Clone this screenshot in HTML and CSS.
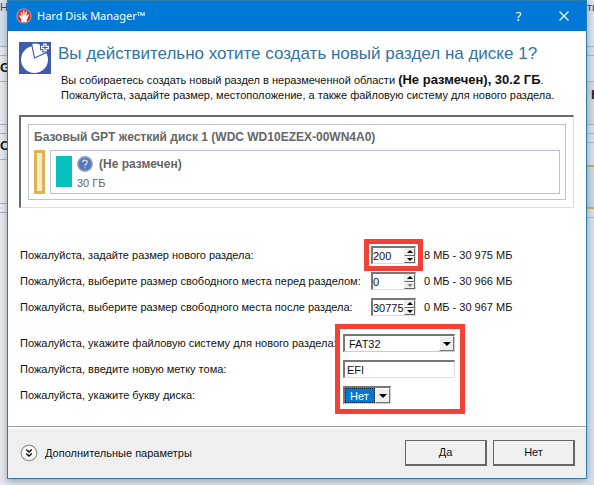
FILE: index.html
```html
<!DOCTYPE html>
<html lang="ru">
<head>
<meta charset="utf-8">
<title>Hard Disk Manager</title>
<link rel="stylesheet" href="styles.css">
</head>
<body>
<div class="behind" aria-hidden="true">
  <div class="strip">
    <div class="band tall tint"><span class="small">Н</span></div>
    <div class="band thin"></div>
    <div class="band mid"><b>G</b></div>
    <div class="band large"></div>
    <div class="band thin"></div>
    <div class="band mid"><b>C</b></div>
    <div class="band large short"></div>
    <div class="band thin"></div>
  </div>
  <div class="strip right">
    <div class="band tall tint"><span class="small">ть</span></div>
    <div class="band thin"></div>
    <div class="band mid"></div>
    <div class="band large grey"><b>Н</b></div>
    <div class="band thin"></div>
    <div class="band thin"></div>
    <div class="band gold"></div>
    <div class="band thin"></div>
  </div>
</div>
<main class="window">
  <header class="titlebar">
    <svg class="app-icon" viewBox="0 0 16 16" aria-hidden="true">
      <circle cx="8" cy="8" r="7.6" fill="#d9a8a4"/>
      <circle cx="8" cy="8" r="6.8" fill="#c8372f"/>
      <path d="M5.5 14 5 10.500 2.800 7.800q.3-1 1.300-.3L5.500 9 4.700 4.500q.6-.9 1.200 0L7 8l.2-5.200q.6-.8 1.200 0L8.700 8l1.200-4.400q.8-.6 1 .3L10.400 8.500l1.700-2q1-.2.800.7L11.200 11l-.7 3z" fill="#fff"/>
    </svg>
    <h1 class="app-name">Hard Disk Manager™</h1>
    <button class="caption" aria-label="Справка">?</button>
    <button class="caption" aria-label="Закрыть">
      <svg class="cross" viewBox="0 0 10 10"><path d="M.5.500l9 9M9.500.500l-9 9" stroke="#fff" stroke-width="1.200"/></svg>
    </button>
  </header>
  <section class="intro">
    <svg class="pie" viewBox="0 0 32 32" aria-hidden="true">
      <path fill="#405ba6" d="M0 0h32v32H0z"/>
      <circle cx="15.500" cy="17.500" r="13.500" fill="#fff"/>
      <path d="M12.500 1.500Q17 .2 21.500 2.200L28.500 10 15.500 16z" fill="#fff" stroke="#405ba6" stroke-width="1.200"/>
      <path d="M26 .5v10M21 5.500h10" stroke="#405ba6" stroke-width="5.500"/>
      <path d="M26 1.500v8M22 5.500h8" stroke="#fff" stroke-width="3.400"/>
      <path d="M26 2.800v5.400M23.300 5.500h5.400" stroke="#405ba6"/>
    </svg>
    <div class="intro-text">
      <h2>Вы действительно хотите создать новый раздел на диске 1?</h2>
      <p>Вы собираетесь создать новый раздел в неразмеченной области <b>(Не размечен), 30.2 ГБ</b>.<br>Пожалуйста, задайте размер, местоположение, а также файловую систему для нового раздела.</p>
    </div>
  </section>
  <section class="disk-well">
    <div class="disk">
      <h3>Базовый GPT жесткий диск 1 (WDC WD10EZEX-00WN4A0)</h3>
      <div class="partitions">
        <div class="reserved"></div>
        <div class="partition">
          <div class="swatch"></div>
          <div>
            <div class="part-name">
              <svg class="help" viewBox="0 0 16 16" aria-hidden="true">
                <circle cx="8" cy="8" r="7.900" fill="#8d9cc4"/>
                <circle cx="8" cy="8" r="6.300" fill="#5878b8"/>
                <path d="M5.700 6.300C5.700 3.500 10.300 3.500 10.300 6.200 10.300 8 8 8 8 9.800M8 11.200v1.400" fill="none" stroke="#dbe4f5" stroke-width="1.200"/>
              </svg>
              <b>(Не размечен)</b>
            </div>
            <div class="part-size">30 ГБ</div>
          </div>
        </div>
      </div>
    </div>
  </section>
  <form class="settings">
    <div class="group">
      <div class="row">
        <label class="size-label" for="size">Пожалуйста, задайте размер нового раздела:</label>
        <div class="spin marked"><input id="size" type="text" value="200"><span class="arrows"><button type="button" class="up" aria-label="Больше"></button><button type="button" class="down" aria-label="Меньше"></button></span></div>
        <span class="range">8 МБ - 30 975 МБ</span>
      </div>
      <div class="row">
        <label class="size-label" for="before">Пожалуйста, выберите размер свободного места перед разделом:</label>
        <div class="spin"><input id="before" type="text" value="0"><span class="arrows"><button type="button" class="up" aria-label="Больше"></button><button type="button" class="down off" aria-label="Меньше"></button></span></div>
        <span class="range">0 МБ - 30 966 МБ</span>
      </div>
      <div class="row">
        <label class="size-label" for="after">Пожалуйста, выберите размер свободного места после раздела:</label>
        <div class="spin"><input id="after" type="text" value="30775"><span class="arrows"><button type="button" class="up" aria-label="Больше"></button><button type="button" class="down" aria-label="Меньше"></button></span></div>
        <span class="range">0 МБ - 30 967 МБ</span>
      </div>
    </div>
    <div class="group fs-group">
      <div class="fs-labels">
        <label for="fs">Пожалуйста, укажите файловую систему для нового раздела:</label>
        <label for="volume">Пожалуйста, введите новую метку тома:</label>
        <label for="letter">Пожалуйста, укажите букву диска:</label>
      </div>
      <div class="fs-fields">
        <div class="combo"><select id="fs"><option>FAT32</option></select><span class="drop"></span></div>
        <input class="volume" id="volume" type="text" value="EFI">
        <div class="combo letter"><select id="letter"><option>Нет</option></select><span class="drop"></span></div>
      </div>
    </div>
  </form>
  <footer class="footer">
    <button class="more">
      <svg class="chevrons" viewBox="0 0 18 18" aria-hidden="true">
        <circle cx="9" cy="9" r="7.800" fill="#fafafa" stroke="#a0a0a0" stroke-width="1.400"/>
        <path d="M6.200 5.500 9 8l2.800-2.500M6.200 9.500 9 12l2.800-2.500" fill="none" stroke="#111" stroke-width="1.500"/>
      </svg>
      Дополнительные параметры
    </button>
    <button class="action">Да</button>
    <button class="action">Нет</button>
  </footer>
</main>
</body>
</html>
```
FILE: styles.css
```css
* { box-sizing: border-box; }
body {
  margin: 0;
  min-height: 100vh;
  padding: 0 7px 7px;
  background: #e6e6e6;
  color: #111;
  font: 11px/14px "Liberation Sans", Arial, sans-serif;
}
h1, h2, h3, p { margin: 0; }
button, input, select { font: inherit; color: inherit; }

/* Parent application window visible around the dialog */
.behind {
  position: absolute;
  inset: 0;
  overflow: hidden;
  display: flex;
  justify-content: space-between;
}
.strip { width: 7px; overflow: hidden; background: #e8e9ec; }
.strip.right { background: #d9dfe8; }
.band { border-bottom: 1px solid #a9b3c4; overflow: hidden; white-space: nowrap; }
.band b { font-size: 13px; }
.right b { padding-left: 4px; color: #301030; }
.tint { background: #d9e2ee; }
.grey { background: #d6d6da; }
.small { font-size: 11px; line-height: 8px; color: #35466c; }
.tall { height: 47px; }
.thin { height: 9px; }
.mid { height: 26px; padding-top: 4px; }
.large { height: 43px; padding-top: 6px; }
.strip:not(.right) .thin + .mid { padding-top: 5px; }
.short { height: 44px; }
.gold { height: 44px; border-top: 2px solid #d7ac3c; border-bottom: 2px solid #d7ac3c; margin-top: 22px; background: #cbd6df; }

.window {
  position: relative;
  border: 1px solid #2f7cae;
  background: #fff;
  box-shadow: 0 2px 7px rgba(40, 70, 110, .45);
}
.titlebar {
  display: flex;
  align-items: center;
  height: 30px;
  padding-left: 8px;
  background: #0078d7;
  color: #fff;
}
.app-icon { width: 16px; height: 16px; margin-right: 5px; }
.app-name { flex: 1; font: 11px/16px "Noto Sans", sans-serif; }
.caption { width: 45px; height: 30px; padding: 0; border: 0; background: none; font: 13px/16px "Noto Sans", sans-serif; }
.cross { display: block; width: 10px; height: 10px; margin: auto; }

.intro { display: flex; gap: 7px; padding: 11px; }
.pie { width: 32px; height: 32px; flex: none; }
.intro-text { white-space: nowrap; }
.intro h2 { font-size: 17px; line-height: 24px; font-weight: 400; color: #3373a5; }
.intro p { padding: 6px 0 0 3px; line-height: 15px; }
.intro b { font-size: 13px; }

.disk-well {
  margin: 1px 12px 0 11px;
  padding: 7px;
  border: 1px solid #e0e0e0;
  border-top: 2px solid #696969;
  border-left: 2px solid #696969;
}
.disk { padding: 4px 5px 5px; border: 1px solid #b9c3d1; color: #666; }
.disk h3, .part-name { font-size: 12px; line-height: 16px; }
.partitions { display: flex; gap: 5px; margin-top: 5px; }
.reserved { width: 11px; border: 3px solid #dfb352; background: #f2ecc8; }
.partition { flex: 1; display: flex; gap: 5px; height: 44px; padding: 5px; border: 1px solid #b9c3d1; }
.swatch { width: 16px; height: 31px; background: #07bfbd; }
.part-name { display: flex; align-items: center; gap: 6px; height: 16px; }
.help { width: 16px; height: 16px; }
.part-size { padding-top: 4px; }

.settings { padding: 34px 12px 12px; }
.row { display: flex; align-items: center; height: 26px; }
.size-label { flex: none; width: 351px; }
.spin {
  display: flex;
  width: 45px;
  height: 18px;
  border: 1px solid #ddd;
  border-top: 2px solid #777;
  border-left: 2px solid #777;
}
.marked { outline: 5px solid #f34235; outline-offset: 2px; }
.spin input { flex: 1; min-width: 0; padding: 0; border: 0; background: none; outline: 0; }
.arrows { display: flex; flex-direction: column; width: 11px; }
.arrows button {
  display: grid;
  place-items: center;
  flex: 1;
  min-height: 0;
  padding: 0;
  border: 1px solid #eee;
  border-right-color: #666;
  border-bottom-color: #666;
  background: #eee;
}
.arrows button::before { content: ""; border: 3px solid transparent; }
.arrows .up::before { border-top: 0; border-bottom-color: #000; }
.arrows .down::before { border-bottom: 0; border-top-color: #000; }
.arrows .off::before { border-top-color: #888; }
.range { margin-left: 8px; white-space: nowrap; }

.fs-group { display: flex; margin-top: 4px; }
.fs-labels { flex: none; width: 315px; padding-top: 6px; line-height: 26px; }
.fs-labels label { display: block; white-space: nowrap; }
.fs-fields {
  display: flex;
  flex-direction: column;
  gap: 8px;
  width: 130px;
  padding: 5px 5px 5px 3px;
  border: 5px solid #f34235;
}
.combo { display: flex; height: 18px; border: 1px solid #ccc; border-top: 2px solid #777; border-left: 2px solid #777; }
.combo select { appearance: none; flex: 1; min-width: 0; padding: 0 4px; border: 0; border-radius: 0; background: #fff; outline: 0; }
.drop { display: grid; place-items: center; width: 15px; border: 1px solid #fff; border-right-color: #777; border-bottom-color: #777; background: #eee; }
.drop::before { content: ""; border: 4px solid transparent; border-top-color: #000; border-bottom: 0; }
.volume { width: 100%; height: 18px; padding: 0 2px; border: 1px solid #ddd; border-top: 2px solid #777; border-left: 2px solid #777; outline: 0; }
.letter { width: 48px; }
.letter select { background: #0078d7; color: #fff; border: 1px dotted #123; }

.footer {
  display: flex;
  align-items: center;
  gap: 6px;
  height: 52px;
  padding: 0 11px 0 12px;
  border-top: 1px solid #a0a0a0;
  box-shadow: inset 0 2px #fff;
  background: #efefef;
}
.more { display: flex; align-items: center; gap: 7px; margin-right: auto; padding: 0; border: 0; background: none; }
.chevrons { width: 18px; height: 18px; }
.action {
  width: 82px;
  height: 26px;
  padding: 0;
  border: 1px solid #666;
  border-right-width: 2px;
  border-bottom-width: 2px;
  background: #f0f0f0;
}
```
